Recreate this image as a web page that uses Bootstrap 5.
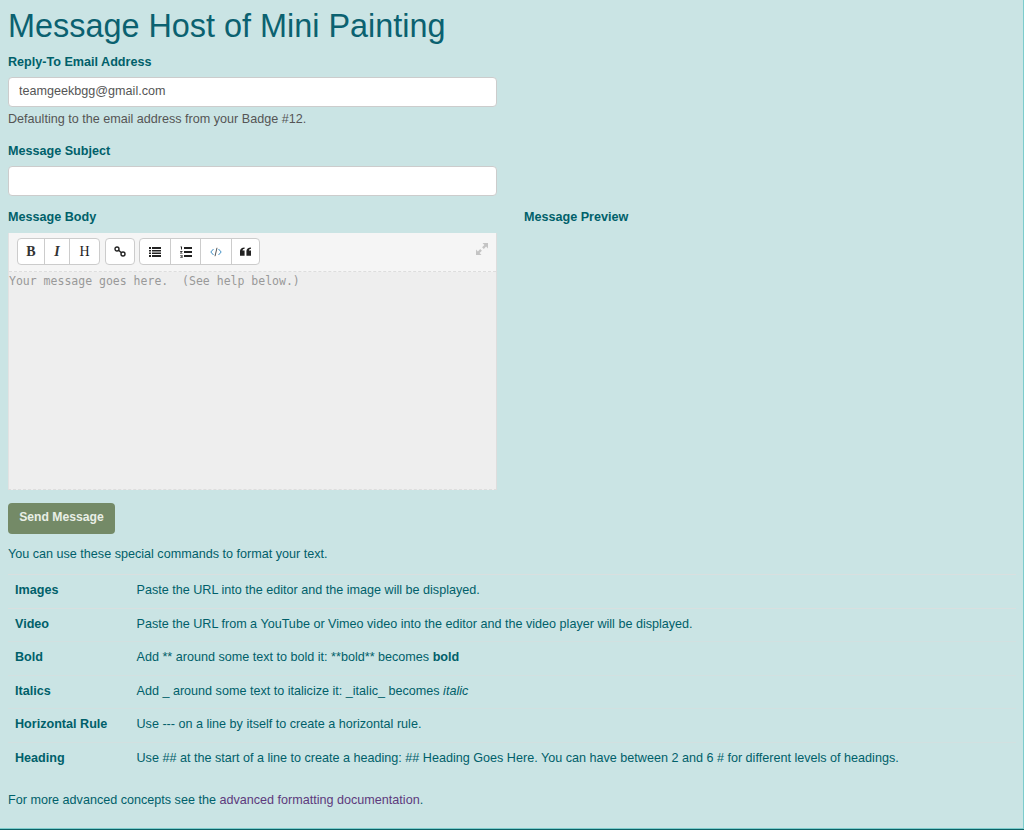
<!DOCTYPE html>
<html lang="en">
<head>
  <meta charset="UTF-8">
  <meta name="viewport" content="width=device-width, initial-scale=1.0">
  <title>Message Host of Mini Painting</title>
  <link href="https://cdn.jsdelivr.net/npm/bootstrap@5.3.2/dist/css/bootstrap.min.css" rel="stylesheet">
  <style>
    html, body { height: 830px; overflow: hidden; }
    body {
      background: #cae4e4;
      color: #00606a;
      font-family: "Liberation Sans", Arial, sans-serif;
      font-size: 12.6px;
      line-height: 18px;
    }
    .page-wrap {
      height: 829px;
      padding: 0 8px;
      border-right: 1px solid #7ccccc;
      border-bottom: 1px solid #7ccccc;
      box-shadow: 0 1px 0 #0d6266;
    }
    .page-title { font-size: 32.4px; line-height: 35px; font-weight: 400; color: #0b6170; margin: 0; padding-top: 9px; box-sizing: content-box; height: 35px; }
    .field-label { display: block; font-weight: 700; color: #00606a; margin: 0; }
    .field-input {
      width: 489px; height: 30px; min-height: 30px; padding: 3px 10px 5px; font-size: 12.6px; line-height: 18px; color: #555;
      border: 1px solid #ccc; border-radius: 4px; background: #fff; box-shadow: none;
    }
    .field-input:focus { border-color: #ccc; box-shadow: none; }
    .label-first { margin-top: 9px; }
    .label-subject { margin-top: 14px; }
    .input-gap { margin-top: 6px; }
    .help-note { color: #555; margin: 3px 0 0; }
    .body-grid { display: grid; grid-template-columns: 489px 1fr; column-gap: 27px; margin-top: 12px; }
    .editor-box { width: 489px; height: 257px; margin-top: 7px; background: #eee; border: 1px solid #ddd; border-top: 0; border-bottom-style: dashed; border-left-color: #e2e2e2; position: relative; }
    .editor-bar { height: 39px; padding: 5px 8px 0; background: #f5f5f5; border-bottom: 1px dashed #ddd; gap: 5px; }
    .editor-bar .tool-group + .tool-group + .tool-group { margin-left: -1px; }
    .tool-group { height: 27px; background: #fff; border: 1px solid #ccc; border-radius: 4px; }
    .tool-btn { display: flex; align-items: center; justify-content: center; height: 25px; width: 30px; padding: 0; color: #222; font: 400 14px/1 "Liberation Serif", serif; border-left: 1px solid #ccc; }
    .tool-btn:first-child { border-left: 0; }
    .tool-b { width: 26px; font-weight: 700; color: #333; }
    .tool-i { width: 25px; font-weight: 700; color: #333; }
    .tool-link { width: 28px; }
    .tool-quote { width: 28px; }
    .tool-code { width: 31px; }
    .expand-ico { position: absolute; right: 8px; top: 10px; }
    .editor-text { padding: 0; font: 11.5px/18px "DejaVu Sans Mono", monospace; color: #999; }
    .send-btn { width: 107px; height: 31px; margin-top: 13px; padding: 0 0 2px; background: #748a67; color: #e9efe6; border: 0; border-radius: 4px; font-size: 12.2px; font-weight: 700; line-height: 27px; }
    .intro-line { margin: 11px 0 0; }
    .help-table { width: 1008px; margin: 11px 0 0; border-collapse: collapse; color: #00606a; }
    .help-table td { padding: 6px 7px; height: 33.5px; border-top: 1px solid #d9dfdf; vertical-align: top; }
    .help-table td:first-child { width: 121.5px; font-weight: 700; padding-right: 0; white-space: nowrap; }
    .help-table tr:nth-child(n+3) td { border-top-color: #d2e0e0; }
    .footer-note { margin: 15px 0 0; }
    .adv-link { color: #5d3a7c; text-decoration: none; }
  </style>
</head>
<body>
  <div class="page-wrap">
    <h1 class="page-title">Message Host of Mini Painting</h1>

    <label class="field-label label-first" for="replyTo">Reply-To Email Address</label>
    <input class="form-control field-input input-gap" id="replyTo" type="text" value="teamgeekbgg@gmail.com">
    <p class="help-note">Defaulting to the email address from your Badge #12.</p>

    <label class="field-label label-subject" for="subject">Message Subject</label>
    <input class="form-control field-input input-gap" id="subject" type="text">

    <div class="body-grid">
      <div>
        <label class="field-label" for="bodyText">Message Body</label>
        <div class="editor-box" id="bodyText">
          <div class="editor-bar d-flex align-items-start">
            <div class="tool-group d-flex">
              <span class="tool-btn tool-b">B</span>
              <span class="tool-btn tool-i fst-italic">I</span>
              <span class="tool-btn">H</span>
            </div>
            <div class="tool-group d-flex">
              <span class="tool-btn tool-link">
                <svg width="12" height="11" viewBox="0 0 12 11" fill="none" stroke="#222" stroke-width="1.400"><circle cx="3" cy="3" r="2"/><circle cx="9" cy="8" r="2"/><path d="M4.500 4.200l3 2.600"/></svg>
              </span>
            </div>
            <div class="tool-group d-flex">
              <span class="tool-btn">
                <svg width="12" height="10" viewBox="0 0 12 10" fill="#222"><path d="M0 0h2v2H0zM3 0h9v2H3zM0 3h2v1.500H0zM3 3h9v1.500H3zM0 5.500h2V7H0zM3 5.500h9V7H3zM0 8h2v2H0zM3 8h9v2H3z"/></svg>
              </span>
              <span class="tool-btn">
                <svg width="12" height="12" viewBox="0 0 12 12" fill="#222"><path d="M4 1h8v2H4zM4 5h8v2H4zM4 9h8v2H4z"/><path d="M0.500 0.500h1.500v3H1V1.300H.5zM0 5h2.500v.7L1 7h1.500v.6H0v-.6l1.500-1.300H0zM0 9h2.500v3H0v-.6h1.700v-.6H.7v-.6h1V9.600H0z"/></svg>
              </span>
              <span class="tool-btn tool-code">
                <svg width="12" height="10" viewBox="0 0 12 10" fill="none" stroke="#3f8fc4" stroke-width="1"><path d="M3.500 2L.8 5l2.700 3M8.500 2l2.700 3-2.700 3"/><path d="M7 .8L5 9.200" stroke="#555"/></svg>
              </span>
              <span class="tool-btn tool-quote">
                <svg width="11" height="9" viewBox="0 0 12 9" fill="#222"><path d="M5 0v1.500C3.500 1.700 2.800 2.400 2.700 3.500H5V9H0V4C0 1.500 2 0 5 0zM12 0v1.500c-1.500.2-2.200.9-2.300 2H12V9H7V4c0-2.500 2-4 5-4z"/></svg>
              </span>
            </div>
          </div>
          <svg class="expand-ico" width="12" height="12" viewBox="0 0 12 12" fill="#c4c4c4"><path d="M6.500 0H12v5.500l-1.900-1.900-2.300 2.300-1.700-1.700 2.300-2.300zM5.500 12H0V6.500l1.900 1.900 2.300-2.300 1.700 1.700-2.300 2.300z"/></svg>
          <div class="editor-text">Your message goes here.&nbsp; (See help below.)</div>
        </div>
      </div>
      <div>
        <span class="field-label">Message Preview</span>
      </div>
    </div>

    <button class="btn send-btn d-block" type="button">Send Message</button>

    <p class="intro-line">You can use these special commands to format your text.</p>

    <table class="help-table">
      <tbody>
        <tr><td>Images</td><td>Paste the URL into the editor and the image will be displayed.</td></tr>
        <tr><td>Video</td><td>Paste the URL from a YouTube or Vimeo video into the editor and the video player will be displayed.</td></tr>
        <tr><td>Bold</td><td>Add ** around some text to bold it: **bold** becomes <b>bold</b></td></tr>
        <tr><td>Italics</td><td>Add _ around some text to italicize it: _italic_ becomes <i>italic</i></td></tr>
        <tr><td>Horizontal Rule</td><td>Use --- on a line by itself to create a horizontal rule.</td></tr>
        <tr><td>Heading</td><td>Use ## at the start of a line to create a heading: ## Heading Goes Here. You can have between 2 and 6 # for different levels of headings.</td></tr>
      </tbody>
    </table>

    <p class="footer-note">For more advanced concepts see the <a class="adv-link" href="#">advanced formatting documentation</a>.</p>
  </div>
</body>
</html>
